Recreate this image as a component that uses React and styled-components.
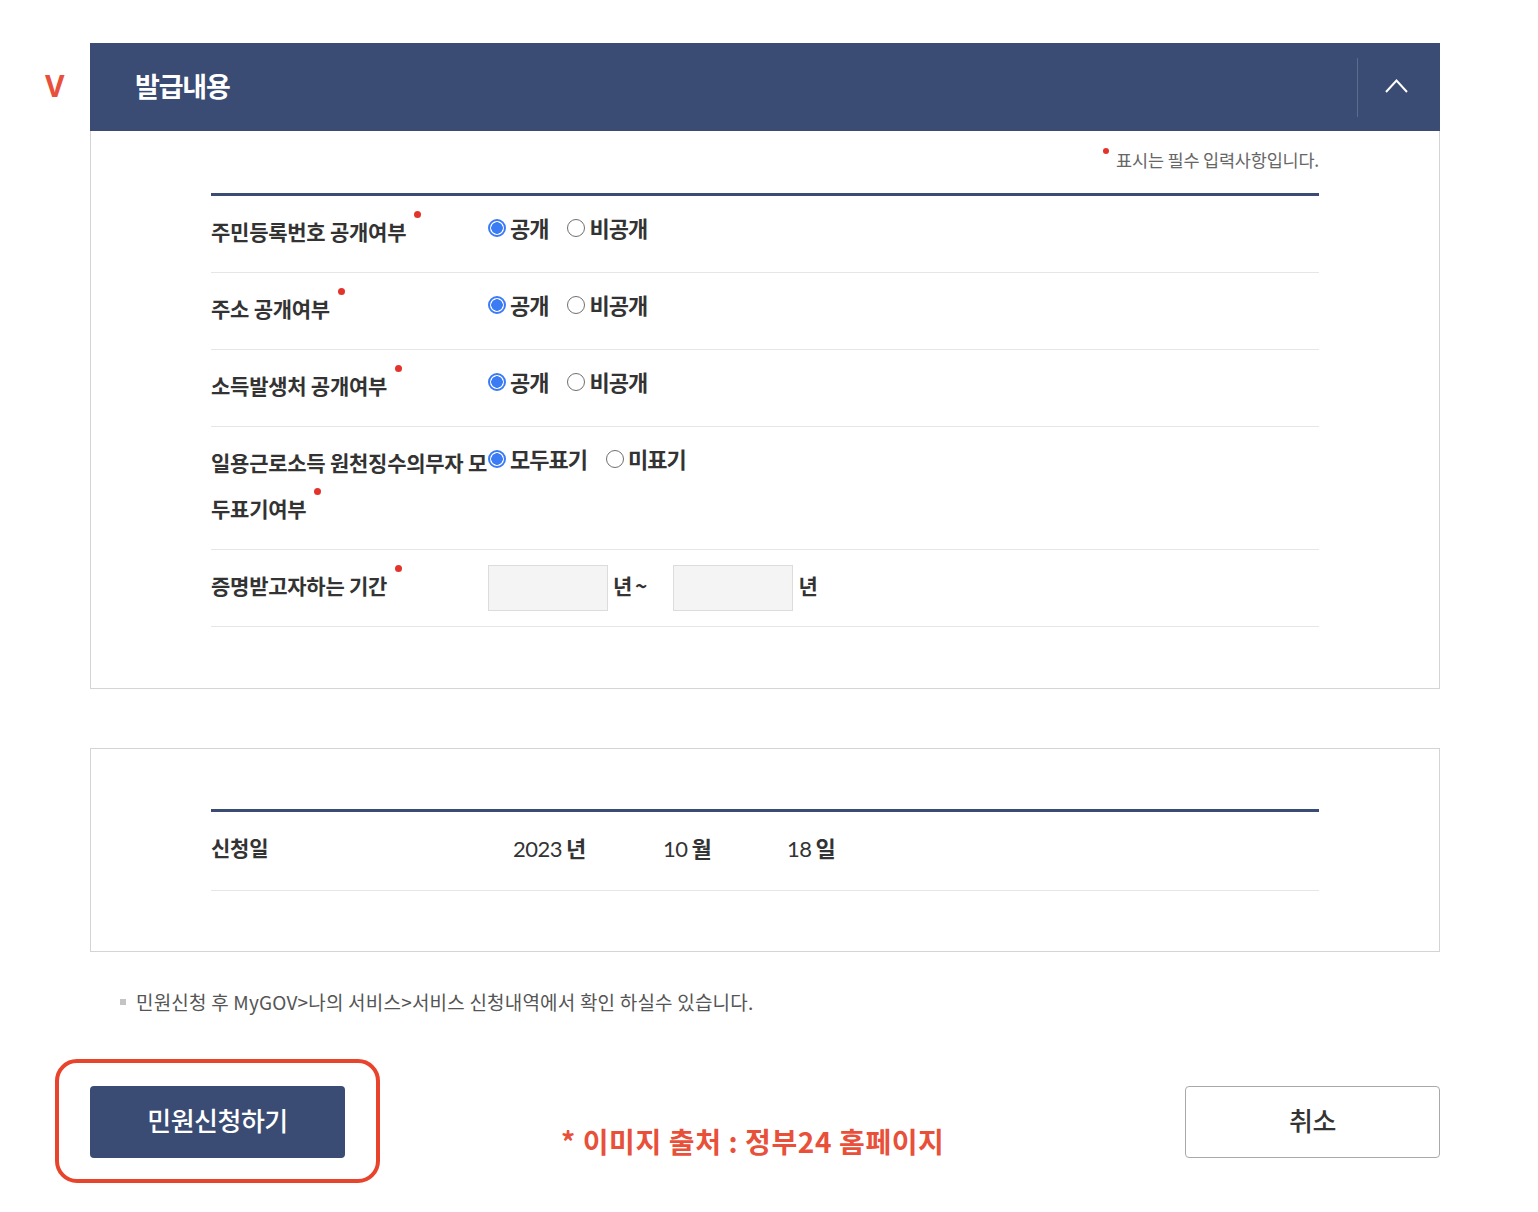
import React from "react";
import styled, { createGlobalStyle } from "styled-components";

const GlobalStyle = createGlobalStyle`
  body {
    margin: 0;
    background: #fff;
    font-family: "Noto Sans CJK KR", "Noto Sans", sans-serif;
    color: #333;
  }
`;

const NAVY = "#3a4b74";

const Page = styled.div`
  width: 1538px;
  padding-top: 43px;
  padding-bottom: 29px;
`;

const HeadRow = styled.div`
  display: flex;
  align-items: stretch;
`;

const Marker = styled.div`
  width: 90px;
  display: flex;
  align-items: center;
  padding-left: 45px;
  padding-bottom: 4px;
  box-sizing: border-box;
  color: #e8503a;
  font-family: "Noto Sans", sans-serif;
  font-weight: 700;
  font-size: 30px;
`;

const HeaderBar = styled.div`
  width: 1350px;
  height: 88px;
  background: ${NAVY};
  display: flex;
  align-items: center;
  justify-content: space-between;
  padding-left: 45px;
  box-sizing: border-box;
`;

const HeaderTitle = styled.h2`
  margin: 0 0 4px;
  color: #fff;
  font-size: 27px;
  font-weight: 700;
  letter-spacing: -1.2px;
`;

const ToggleButton = styled.button`
  width: 83px;
  height: 59px;
  border: 0;
  border-left: 1px solid rgba(255, 255, 255, 0.18);
  background: transparent;
  display: flex;
  align-items: center;
  justify-content: center;
  padding: 0 5px 2px 0;
  cursor: pointer;
`;

const Panel = styled.section`
  margin-left: 90px;
  width: 1350px;
  box-sizing: border-box;
  border: 1px solid #d4d4d4;
  border-top: ${(p) => (p.attached ? "0" : "1px solid #d4d4d4")};
  margin-top: ${(p) => (p.attached ? "0" : "59px")};
  padding: ${(p) => (p.attached ? "18px 120px 61px" : "60px 120px 60px")};
`;

const Notice = styled.p`
  margin: 0 0 22px;
  display: flex;
  justify-content: flex-end;
  align-items: flex-start;
  font-size: 17.5px;
  line-height: 22px;
  color: #666;
  letter-spacing: -0.2px;
`;

const NoticeDot = styled.span`
  width: 6px;
  height: 6px;
  border-radius: 50%;
  background: #e3342b;
  margin: -1px 7px 0 0;
`;

const Table = styled.div`
  border-top: 3px solid ${NAVY};
`;

const Row = styled.div`
  display: flex;
  border-bottom: 1px solid #e6e6e6;
  padding: ${(p) => (p.date ? "12px 0 20px" : "12px 0 18px")};
`;

const Label = styled.div`
  width: 277px;
  flex-shrink: 0;
  font-size: 21px;
  font-weight: 700;
  line-height: 46px;
  letter-spacing: -0.25px;
  color: #333;
`;

const Required = styled.span`
  display: inline-block;
  width: 7px;
  height: 7px;
  border-radius: 50%;
  background: #e3342b;
  vertical-align: top;
  margin-top: 3px;
  margin-left: 8px;
`;

const Options = styled.div`
  display: flex;
  align-items: center;
  height: 38px;
  gap: 19px;
`;

const RadioLabel = styled.label`
  display: flex;
  align-items: center;
  gap: 4px;
  font-size: 22px;
  font-weight: 700;
  letter-spacing: -1px;
  color: #333;
  cursor: pointer;
`;

const RadioDot = styled.span`
  width: 18px;
  height: 18px;
  border-radius: 50%;
  box-sizing: border-box;
  border: ${(p) => (p.checked ? "2px solid #3b7cf5" : "1px solid #6f6f6f")};
  background: ${(p) =>
    p.checked ? "radial-gradient(circle, #3b7cf5 0 5.5px, #fff 6px)" : "#fff"};
  flex-shrink: 0;
  margin-top: 2px;
`;

const PeriodField = styled.div`
  display: flex;
  align-items: flex-start;
  height: 46px;
  margin: 3px 0 -3px;
  font-size: 21px;
  font-weight: 700;
  line-height: 40px;
  letter-spacing: -1px;
`;

const YearInput = styled.input`
  width: 120px;
  height: 46px;
  box-sizing: border-box;
  border: 1px solid #dcdcdc;
  background: #f4f4f4;
  margin: 0 5px 0 0;
  outline: none;
`;

const Unit = styled.span`
  margin-right: ${(p) => p.gap || 0}px;
`;

const DateValues = styled.div`
  display: flex;
  align-items: center;
  height: 46px;
  padding-left: 25px;
`;

const DatePart = styled.span`
  width: ${(p) => p.w}px;
  font-family: Lato, "Noto Sans CJK KR", sans-serif;
  font-size: 22px;
  color: #333;
  letter-spacing: -0.5px;
  b {
    font-family: "Noto Sans CJK KR", sans-serif;
    font-weight: 700;
    margin-left: 4px;
  }
`;

const Guide = styled.p`
  margin: 39px 0 0 120px;
  font-size: 19px;
  line-height: 22px;
  color: #555;
  letter-spacing: 0.2px;
  display: flex;
  align-items: center;
  &::before {
    content: "";
    width: 6px;
    height: 6px;
    background: #c4c4c4;
    margin-right: 10px;
  }
`;

const ButtonRow = styled.div`
  display: flex;
  align-items: flex-start;
  margin: 73px 0 0 90px;
  width: 1350px;
`;

const Highlight = styled.div`
  position: relative;
  &::after {
    content: "";
    position: absolute;
    left: -35px;
    top: -27px;
    right: -35px;
    bottom: -25px;
    border: 4px solid #e8432b;
    border-radius: 22px;
    pointer-events: none;
  }
`;

const ActionButton = styled.button`
  width: 255px;
  height: 72px;
  border-radius: 4px;
  padding: 0 0 6px;
  font-family: "Noto Sans CJK KR", sans-serif;
  font-size: 26px;
  font-weight: 500;
  letter-spacing: -0.5px;
  cursor: pointer;
  background: ${(p) => (p.primary ? NAVY : "#fff")};
  color: ${(p) => (p.primary ? "#fff" : "#333")};
  border: ${(p) => (p.primary ? "0" : "1px solid #a9a9a9")};
`;

const Source = styled.p`
  margin: 35px 0 0 216px;
  flex: 1;
  font-size: 28px;
  font-weight: 700;
  color: #e8503a;
  letter-spacing: 0.6px;
`;

function Radio({ checked, children }) {
  return (
    <RadioLabel>
      <RadioDot checked={checked} />
      {children}
    </RadioLabel>
  );
}

const disclosureRows = [
  { label: "주민등록번호 공개여부", options: ["공개", "비공개"] },
  { label: "주소 공개여부", options: ["공개", "비공개"] },
  { label: "소득발생처 공개여부", options: ["공개", "비공개"] },
  { label: "일용근로소득 원천징수의무자 모두표기여부", options: ["모두표기", "미표기"] },
];

export default function App() {
  return (
    <Page>
      <GlobalStyle />
      <HeadRow>
        <Marker>V</Marker>
        <HeaderBar>
          <HeaderTitle>발급내용</HeaderTitle>
          <ToggleButton aria-label="접기">
            <svg width="23" height="14" viewBox="0 0 23 14">
              <polyline points="1,13 11.5,1.5 22,13" fill="none" stroke="#fff" strokeWidth="2" />
            </svg>
          </ToggleButton>
        </HeaderBar>
      </HeadRow>

      <Panel attached>
        <Notice>
          <NoticeDot />
          표시는 필수 입력사항입니다.
        </Notice>
        <Table>
          {disclosureRows.map((row) => (
            <Row key={row.label}>
              <Label>
                {row.label}
                <Required />
              </Label>
              <Options>
                <Radio checked>{row.options[0]}</Radio>
                <Radio>{row.options[1]}</Radio>
              </Options>
            </Row>
          ))}
          <Row>
            <Label>
              증명받고자하는 기간
              <Required />
            </Label>
            <PeriodField>
              <YearInput />
              <Unit gap={27}>년 ~</Unit>
              <YearInput />
              <Unit>년</Unit>
            </PeriodField>
          </Row>
        </Table>
      </Panel>

      <Panel>
        <Table>
          <Row date>
            <Label>신청일</Label>
            <DateValues>
              <DatePart w={150}>
                2023<b>년</b>
              </DatePart>
              <DatePart w={124}>
                10<b>월</b>
              </DatePart>
              <DatePart w={80}>
                18<b>일</b>
              </DatePart>
            </DateValues>
          </Row>
        </Table>
      </Panel>

      <Guide>민원신청 후 MyGOV&gt;나의 서비스&gt;서비스 신청내역에서 확인 하실수 있습니다.</Guide>

      <ButtonRow>
        <Highlight>
          <ActionButton primary>민원신청하기</ActionButton>
        </Highlight>
        <Source>* 이미지 출처 : 정부24 홈페이지</Source>
        <ActionButton>취소</ActionButton>
      </ButtonRow>
    </Page>
  );
}
